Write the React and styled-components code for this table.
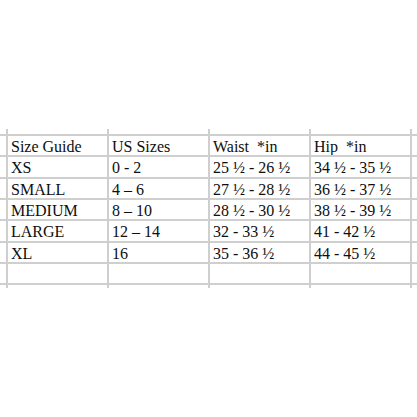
import styled, { createGlobalStyle } from "styled-components";

const GlobalStyle = createGlobalStyle`
  html, body {
    margin: 0;
    padding: 0;
    background: #ffffff;
  }
`;

const Page = styled.div`
  width: 417px;
  height: 417px;
  padding-top: 129px;
  box-sizing: border-box;
  background: #ffffff;
`;

const Sheet = styled.div`
  display: grid;
  grid-template-columns: 6px 99px 99px 99px 99px 5px;
  grid-template-rows: 5px 19px 20px 19px 19px 20px 19px 19px 3px;
  gap: 2px;
  background: #cfcfcf;
`;

const Cell = styled.div`
  background: #ffffff;
  font-family: "Liberation Serif", "Times New Roman", serif;
  font-size: 16px;
  line-height: 19px;
  color: #0e0e0e;
  padding: 1px 0 0 3px;
  white-space: pre;
  overflow: hidden;
  box-sizing: border-box;
`;

const rows = [
  ["Size Guide", "US Sizes", "Waist  *in", "Hip  *in"],
  ["XS", "0 - 2", "25 ½ - 26 ½", "34 ½ - 35 ½"],
  ["SMALL", "4 – 6", "27 ½ - 28 ½", "36 ½ - 37 ½"],
  ["MEDIUM", "8 – 10", "28 ½ - 30 ½", "38 ½ - 39 ½"],
  ["LARGE", "12 – 14", "32 - 33 ½", "41 - 42 ½"],
  ["XL", "16", "35 - 36 ½", "44 - 45 ½"],
  ["", "", "", ""],
];

const blank = ["", "", "", ""];

export default function App() {
  const all = [blank, ...rows, blank];
  return (
    <>
      <GlobalStyle />
      <Page>
        <Sheet>
          {all.map((row, r) => [
            <Cell key={`${r}-l`} />,
            ...row.map((text, c) => (
              <Cell key={`${r}-${c}`}>{text}</Cell>
            )),
            <Cell key={`${r}-r`} />,
          ])}
        </Sheet>
      </Page>
    </>
  );
}
